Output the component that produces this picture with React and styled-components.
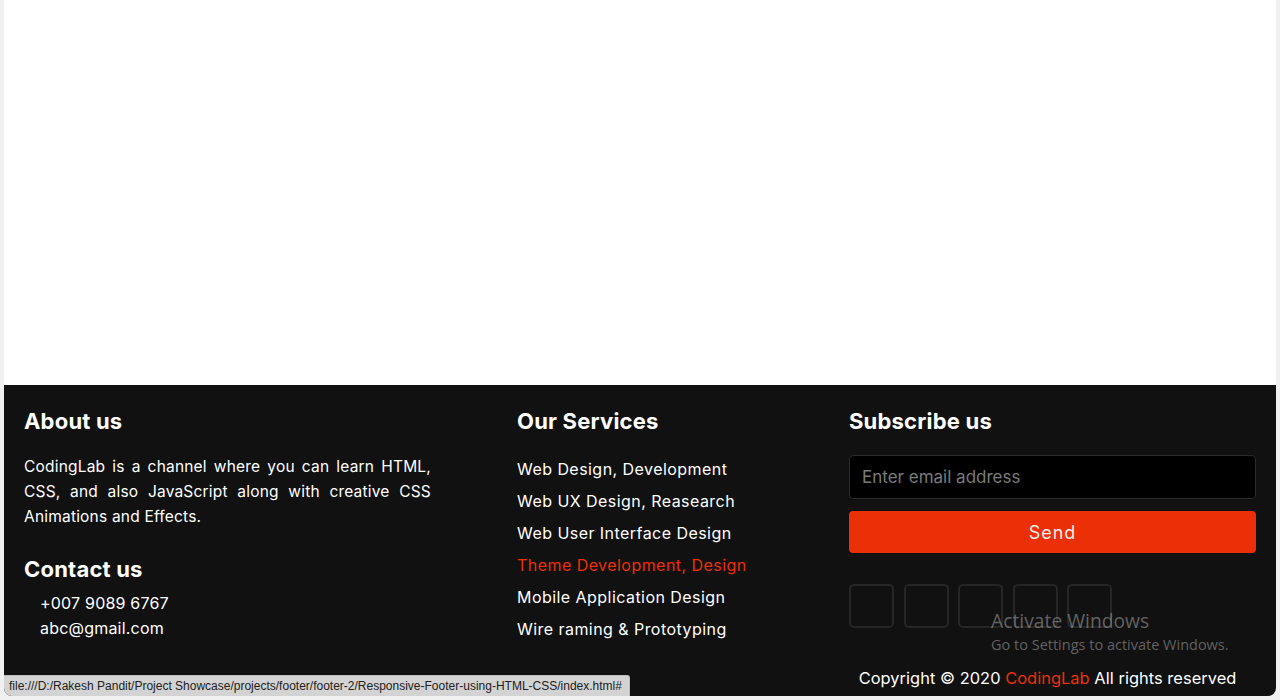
import React from 'react'
import styled, { createGlobalStyle } from 'styled-components'

const GlobalStyle = createGlobalStyle`
  * { box-sizing: border-box; }
  body {
    margin: 0;
    background: #f0f0f0;
    font-family: "Inter", "Liberation Sans", sans-serif;
  }
`

const Frame = styled.div`
  position: relative;
  margin: 0 4px;
  height: 696px;
  display: flex;
  flex-direction: column;
  background: #fff;
  border-radius: 0 0 8px 8px;
  overflow: hidden;
`

const Page = styled.main`
  height: 385px;
  flex-shrink: 0;
  background: #fff;
`

const Footer = styled.footer`
  flex: 1;
  background: #111;
  color: #fff;
  padding: 20px 20px 0;
  display: grid;
  grid-template-columns: 407px 1fr 407px;
`

const Column = styled.div`
  display: flex;
  flex-direction: column;
  padding-left: ${p => p.$indent || 0}px;
`

const Heading = styled.h2`
  margin: 0;
  font-size: 22px;
  font-weight: 700;
  line-height: 32px;
  letter-spacing: 0.2px;
  margin-top: ${p => p.$top || 0}px;
`

const Text = styled.p`
  margin: 17px 0 0;
  font-size: 15.5px;
  line-height: 25px;
  text-align: justify;
  letter-spacing: 0.2px;
`

const ContactList = styled.ul`
  list-style: none;
  margin: 6px 0 0;
  padding: 0 0 0 16px;
`

const ContactItem = styled.li`
  font-size: 16px;
  line-height: 25px;
  letter-spacing: 0.2px;
`

const ServiceList = styled.ul`
  list-style: none;
  margin: 16px 0 0;
  padding: 0;
`

const ServiceItem = styled.li`
  font-size: 16px;
  line-height: 32px;
  letter-spacing: 0.45px;
  color: ${p => (p.$active ? '#eb2f06' : '#fff')};
`

const EmailInput = styled.input`
  margin-top: 18px;
  height: 44px;
  width: 100%;
  background: #000;
  border: 1px solid #2a2a2a;
  border-radius: 4px;
  padding: 0 12px;
  color: #fff;
  font-family: inherit;
  font-size: 17px;
  outline: none;
  &::placeholder { color: #7a7a7a; }
`

const SendButton = styled.button`
  margin-top: 12px;
  height: 42px;
  width: 100%;
  border: none;
  border-radius: 4px;
  background: #eb2f06;
  color: #eee;
  font-family: inherit;
  font-size: 18px;
  letter-spacing: 1px;
`

const Socials = styled.div`
  display: flex;
  gap: 9.5px;
  margin-top: 31px;
`

const SocialBox = styled.a`
  display: block;
  width: 45px;
  height: 44px;
  border: 2px solid #262626;
  border-radius: 5px;
`

const Copyright = styled.div`
  margin-top: 40px;
  text-align: center;
  font-size: 16.4px;
  letter-spacing: 0.05px;
  padding-right: 10px;
`

const Brand = styled.span`
  color: #eb2f06;
`

const StatusBar = styled.div`
  position: absolute;
  left: 0;
  bottom: 0;
  width: 626px;
  height: 21px;
  background: #d3d3d3;
  border: 1px solid #bdbdbd;
  border-left: none;
  border-bottom: none;
  border-top-right-radius: 3px;
  color: #222;
  font-family: "Liberation Sans", sans-serif;
  font-size: 12px;
  line-height: 20px;
  padding-left: 5px;
  white-space: nowrap;
`

const Watermark = styled.div`
  position: absolute;
  left: 987px;
  top: 607px;
  color: rgba(200, 200, 200, 0.45);
  font-family: "Open Sans", sans-serif;
  pointer-events: none;
`

const WatermarkTitle = styled.div`
  font-size: 19.3px;
  line-height: 28px;
`

const WatermarkSub = styled.div`
  font-size: 14.5px;
  line-height: 20px;
`

const services = [
  'Web Design, Development',
  'Web UX Design, Reasearch',
  'Web User Interface Design',
  'Theme Development, Design',
  'Mobile Application Design',
  'Wire raming & Prototyping',
]

export default function App() {
  return (
    <>
      <GlobalStyle />
      <Frame>
        <Page />
        <Footer>
          <Column>
            <Heading>About us</Heading>
            <Text>
              CodingLab is a channel where you can learn HTML, CSS, and also JavaScript along with creative CSS Animations and Effects.
            </Text>
            <Heading $top={24}>Contact us</Heading>
            <ContactList>
              <ContactItem>+007 9089 6767</ContactItem>
              <ContactItem>abc@gmail.com</ContactItem>
            </ContactList>
          </Column>
          <Column $indent={86}>
            <Heading>Our Services</Heading>
            <ServiceList>
              {services.map((s, i) => (
                <ServiceItem key={s} $active={i === 3}>{s}</ServiceItem>
              ))}
            </ServiceList>
          </Column>
          <Column>
            <Heading>Subscribe us</Heading>
            <EmailInput type="email" placeholder="Enter email address" />
            <SendButton type="button">Send</SendButton>
            <Socials>
              {[0, 1, 2, 3, 4].map(i => <SocialBox key={i} href="#" />)}
            </Socials>
            <Copyright>
              Copyright © 2020 <Brand>CodingLab</Brand> All rights reserved
            </Copyright>
          </Column>
        </Footer>
        <StatusBar>file:///D:/Rakesh Pandit/Project Showcase/projects/footer/footer-2/Responsive-Footer-using-HTML-CSS/index.html#</StatusBar>
        <Watermark>
          <WatermarkTitle>Activate Windows</WatermarkTitle>
          <WatermarkSub>Go to Settings to activate Windows.</WatermarkSub>
        </Watermark>
      </Frame>
    </>
  )
}
